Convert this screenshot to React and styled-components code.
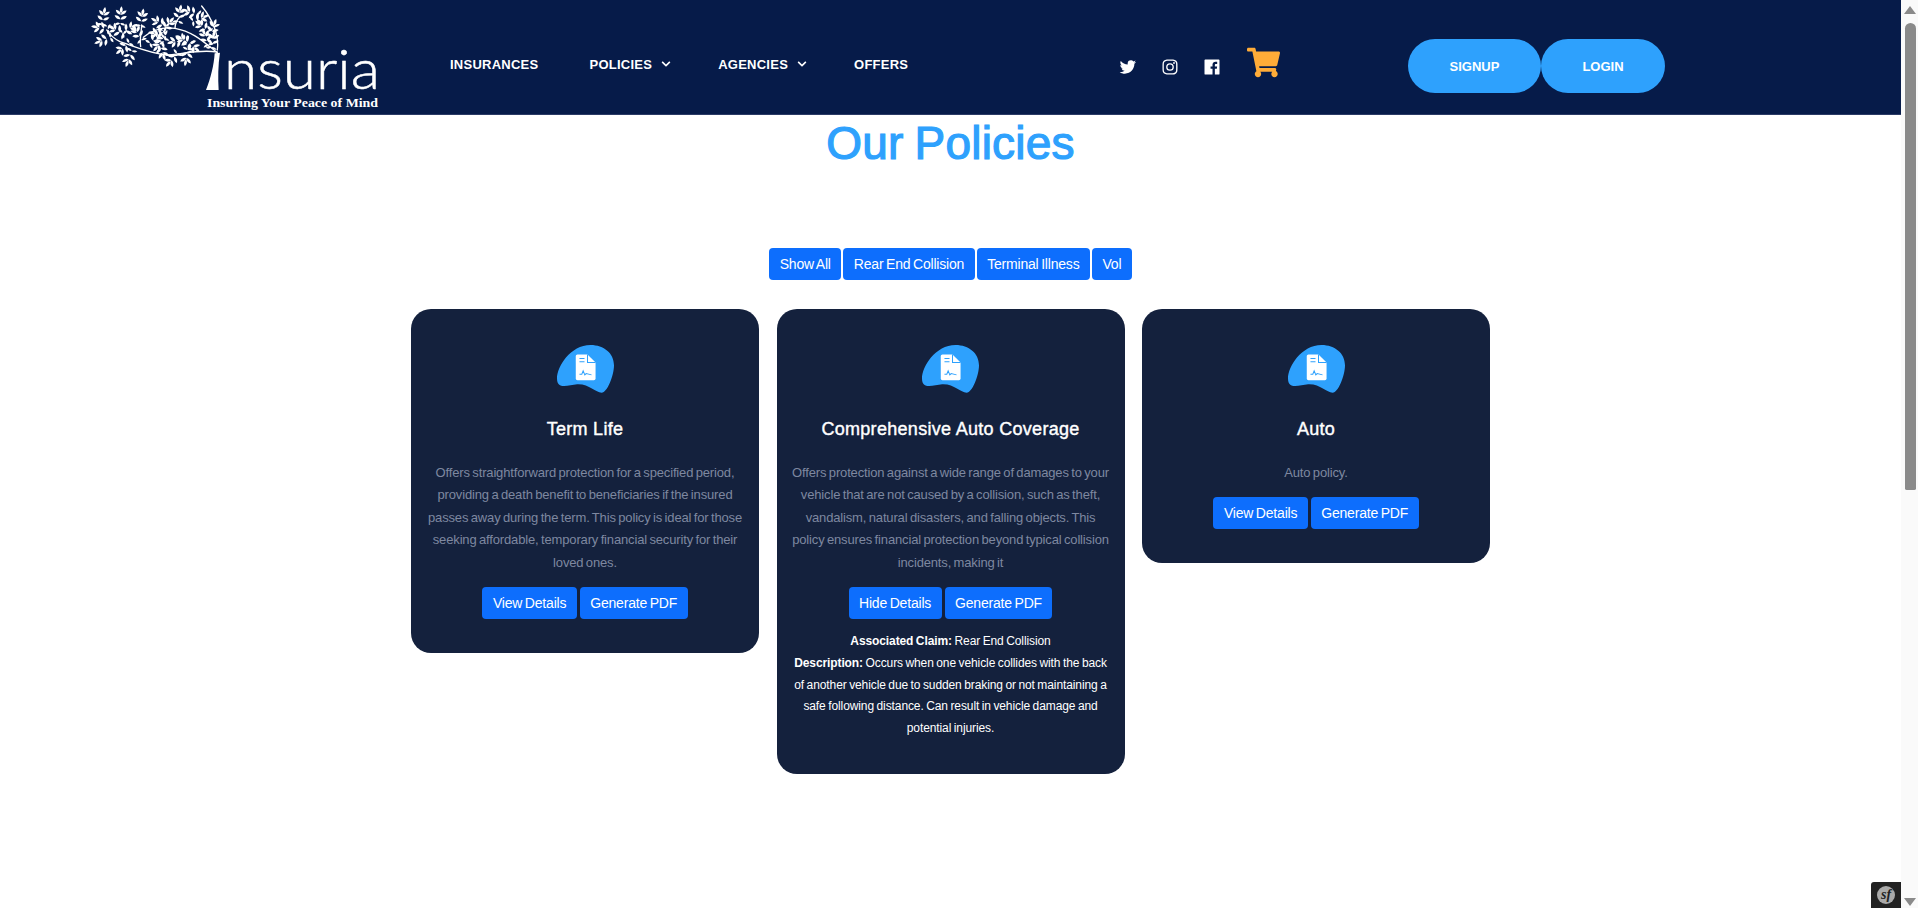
import React from 'react';
import styled, { createGlobalStyle } from 'styled-components';
import { BiLogoTwitter, BiLogoInstagram, BiLogoFacebookSquare } from 'react-icons/bi';
import { FaShoppingCart, FaChevronDown } from 'react-icons/fa';

const GlobalStyle = createGlobalStyle`
  html, body {
    margin: 0;
    height: 908px;
    overflow: hidden;
    background: #fff;
    font-family: "Liberation Sans", Arial, sans-serif;
  }
  * { box-sizing: border-box; }
`;

const Page = styled.div`
  width: 1901px;
  height: 908px;
`;

const Header = styled.header`
  display: flex;
  align-items: center;
  height: 115px;
  padding: 18px 0 0 90px;
  background: #061b49;
  border-bottom: 1px solid #2b3b66;
`;

const LogoSvg = styled.svg`
  display: block;
  flex: 0 0 360px;
  align-self: flex-start;
  height: 115px;
  margin-top: -18px;
`;

const Nav = styled.nav`
  display: flex;
  flex: 0 0 668px;
  align-items: center;
  gap: 51px;
  margin-top: -4px;
`;

const NavLink = styled.a`
  display: flex;
  align-items: center;
  gap: 9px;
  color: #fff;
  font-size: 13px;
  font-weight: 700;
  letter-spacing: 0.25px;
  svg {
    margin-right: -4px;
    font-size: 10px;
  }
`;

const Socials = styled.div`
  display: flex;
  flex: 0 0 290px;
  align-items: center;
  gap: 22px;
  margin-top: 2px;
  color: #fff;
  font-size: 20px;
  svg { display: block; }
`;

const Cart = styled(FaShoppingCart)`
  margin: 0 0 10px 3px;
  color: #ffac38;
  font-size: 33px;
`;

const AuthButton = styled.a`
  display: flex;
  align-items: center;
  justify-content: center;
  width: ${props => props.$width}px;
  height: 54px;
  border-radius: 27px;
  background: #2ea1fd;
  color: #fff;
  font-size: 13px;
  font-weight: 700;
`;

const Title = styled.h1`
  margin: 0;
  padding-top: 2px;
  color: #2ea1fd;
  font-size: 46px;
  font-weight: 400;
  line-height: 52px;
  text-align: center;
  letter-spacing: 0.2px;
  word-spacing: -2px;
  -webkit-text-stroke: 1.2px #2ea1fd;
`;

const FilterRow = styled.div`
  display: flex;
  justify-content: center;
  gap: 2px;
  margin-top: 79px;
`;

const Button = styled.button`
  height: 32px;
  padding: 0 10.5px;
  border: 0;
  border-radius: 4px;
  background: #0d6efd;
  color: #fff;
  font-family: inherit;
  font-size: 14px;
  letter-spacing: -0.2px;
  word-spacing: -1px;
  white-space: nowrap;
`;

const CardGrid = styled.div`
  display: grid;
  grid-template-columns: repeat(3, 348px);
  justify-content: center;
  align-items: start;
  gap: 17.5px;
  margin-top: 29px;
`;

const Card = styled.article`
  display: flex;
  flex-direction: column;
  align-items: center;
  padding: 36px 12px 34px;
  border-radius: 20px;
  background: #14213d;
  text-align: center;
`;

const Blob = styled.svg`
  display: block;
  width: 57px;
  height: 48px;
`;

const CardTitle = styled.h3`
  margin: 24px 0 0;
  color: #fff;
  font-size: 18px;
  font-weight: 400;
  line-height: 24px;
  letter-spacing: 0.3px;
  -webkit-text-stroke: 0.4px #fff;
`;

const CardText = styled.p`
  margin: 21px 0 0;
  color: #7e88a0;
  font-size: 13px;
  line-height: 22.4px;
  letter-spacing: -0.15px;
  word-spacing: -1px;
`;

const CardActions = styled.div`
  display: flex;
  gap: 3px;
  margin-top: 13px;
`;

const Claim = styled.div`
  margin-top: 12px;
  color: #fff;
  font-size: 12px;
  line-height: 21.8px;
  letter-spacing: -0.1px;
  word-spacing: -0.7px;
`;

const Rail = styled.div`
  position: fixed;
  top: 0;
  right: 0;
  width: 17px;
  height: 908px;
  background: #fafafa;
`;

const Arrow = styled.div`
  position: absolute;
  left: 3px;
  ${props => (props.$down ? 'top: 898px;' : 'top: 6px;')}
  border-left: 6px solid transparent;
  border-right: 6px solid transparent;
  ${props => (props.$down ? 'border-top: 8px solid #8a8a8a;' : 'border-bottom: 8px solid #8a8a8a;')}
`;

const Thumb = styled.div`
  position: absolute;
  top: 23px;
  left: 4px;
  width: 11px;
  height: 467px;
  border-radius: 6px 6px 2px 2px;
  background: #8a8a8a;
`;

const SfBar = styled.div`
  position: fixed;
  right: 17px;
  bottom: 0;
  display: flex;
  align-items: center;
  justify-content: center;
  width: 30px;
  height: 26px;
  border-top-left-radius: 3px;
  background: #222;
`;

const SfBadge = styled.span`
  display: flex;
  align-items: center;
  justify-content: center;
  width: 18px;
  height: 18px;
  border-radius: 50%;
  background: #aaa;
  color: #222;
  font-family: "Liberation Serif", serif;
  font-size: 14px;
  font-style: italic;
  font-weight: 700;
`;

// x, y, direction of each leaf spray, in 3x logo units
const sprays = [
  [130, 52, 10], [124, 84, -80], [132, 120, -110], [182, 50, 5], [172, 92, -60], [205, 88, 60],
  [245, 56, 10], [234, 102, -30], [300, 70, -60], [322, 76, 40], [295, 102, -80], [358, 44, 10],
  [395, 38, -70], [418, 56, 70], [430, 82, -50], [458, 86, 20], [458, 122, 10], [375, 122, -60],
  [395, 135, 130], [300, 130, -140], [305, 152, 160], [192, 142, -130], [208, 172, -160],
  [338, 176, -140], [380, 168, -170], [285, 116, 50], [352, 124, -100], [438, 114, -20],
];

const Leaf = ({ a, at, s = 1.25 }) => (
  <path transform={`translate(0 ${at}) rotate(${a}) scale(${s})`} d="M0 0 Q7 -8 0 -17 Q-7 -8 0 0 Z" />
);

// wind-blown tree over the I of the wordmark
const Logo = () => (
  <LogoSvg viewBox="0 0 360 115" fill="#fff">
    <g transform="translate(-30 0) scale(0.3333)">
      <path d="M438 270 C452 235 462 195 464 160 L480 158 C474 195 474 235 476 270 Z" />
      <g fill="none" stroke="#fff" strokeWidth="4" strokeLinecap="round">
        <path d="M472 158 C430 125 400 95 345 85 C310 80 275 92 250 112" />
        <path d="M472 156 C420 148 380 160 320 165 C270 160 230 142 180 125 C160 115 150 105 140 90" />
        <path d="M242 140 C238 115 245 95 245 75" />
        <path d="M472 150 C478 110 460 60 425 18" />
        <path d="M320 165 C345 172 370 160 400 152" />
        <path d="M345 85 C345 70 350 60 360 50" />
      </g>
      {sprays.map(([x, y, r]) => (
        <g key={`${x}-${y}`} transform={`translate(${x} ${y}) rotate(${r})`}>
          <Leaf a={0} at={-10} />
          <Leaf a={-50} at={-6} />
          <Leaf a={50} at={-6} />
          <Leaf a={-60} at={8} />
          <Leaf a={60} at={8} />
          <Leaf a={-105} at={20} s={1} />
          <Leaf a={105} at={20} s={1} />
        </g>
      ))}
    </g>
    <text x="134" y="89" fontFamily="Lato, sans-serif" fontWeight="300" fontSize="56" stroke="#fff" strokeWidth="0.5" textLength="156" lengthAdjust="spacingAndGlyphs">nsuria</text>
    <text x="117" y="107" fontFamily="'Liberation Serif', serif" fontWeight="700" fontSize="13" textLength="171" lengthAdjust="spacingAndGlyphs">Insuring Your Peace of Mind</text>
  </LogoSvg>
);

const PolicyIcon = () => (
  <Blob viewBox="470 135 170 143">
    <path fill="#2ea1fd" d="M570 135 C610 135 640 160 640 195 C640 225 620 277 603 277 C585 277 565 250 530 252 C505 254 470 270 470 235 C470 200 510 135 570 135 Z" />
    <path fill="#fff" d="M526 168 Q526 163 531 163 H561 L585 187 V235 Q585 240 580 240 H531 Q526 240 526 235 Z" />
    <g fill="none" stroke="#2ea1fd" strokeWidth="3">
      <path d="M561 163 V187 H585" />
      <path d="M537 175 H552 M537 185 H552" />
      <path d="M537 222 H544 L548 212 L553 224 L557 220 L573 224" />
    </g>
  </Blob>
);

const policies = [
  {
    name: 'Term Life',
    text: 'Offers straightforward protection for a specified period, providing a death benefit to beneficiaries if the insured passes away during the term. This policy is ideal for those seeking affordable, temporary financial security for their loved ones.',
    action: 'View Details',
  },
  {
    name: 'Comprehensive Auto Coverage',
    text: 'Offers protection against a wide range of damages to your vehicle that are not caused by a collision, such as theft, vandalism, natural disasters, and falling objects. This policy ensures financial protection beyond typical collision incidents, making it',
    action: 'Hide Details',
    claim: {
      name: 'Rear End Collision',
      text: 'Occurs when one vehicle collides with the back of another vehicle due to sudden braking or not maintaining a safe following distance. Can result in vehicle damage and potential injuries.',
    },
  },
  { name: 'Auto', text: 'Auto policy.', action: 'View Details' },
];

export default function App() {
  return (
    <Page>
      <GlobalStyle />
      <Header>
        <Logo />
        <Nav>
          <NavLink>INSURANCES</NavLink>
          <NavLink>POLICIES <FaChevronDown /></NavLink>
          <NavLink>AGENCIES <FaChevronDown /></NavLink>
          <NavLink>OFFERS</NavLink>
        </Nav>
        <Socials>
          <BiLogoTwitter />
          <BiLogoInstagram />
          <BiLogoFacebookSquare />
          <Cart />
        </Socials>
        <AuthButton $width={133}>SIGNUP</AuthButton>
        <AuthButton $width={124}>LOGIN</AuthButton>
      </Header>
      <main>
        <Title>Our Policies</Title>
        <FilterRow>
          <Button>Show All</Button>
          <Button>Rear End Collision</Button>
          <Button>Terminal Illness</Button>
          <Button>Vol</Button>
        </FilterRow>
        <CardGrid>
          {policies.map(policy => (
            <Card key={policy.name}>
              <PolicyIcon />
              <CardTitle>{policy.name}</CardTitle>
              <CardText>{policy.text}</CardText>
              <CardActions>
                <Button>{policy.action}</Button>
                <Button>Generate PDF</Button>
              </CardActions>
              {policy.claim && (
                <Claim>
                  <strong>Associated Claim:</strong> {policy.claim.name}
                  <br />
                  <strong>Description:</strong> {policy.claim.text}
                </Claim>
              )}
            </Card>
          ))}
        </CardGrid>
      </main>
      <Rail>
        <Arrow />
        <Thumb />
        <Arrow $down />
      </Rail>
      <SfBar><SfBadge>sf</SfBadge></SfBar>
    </Page>
  );
}
